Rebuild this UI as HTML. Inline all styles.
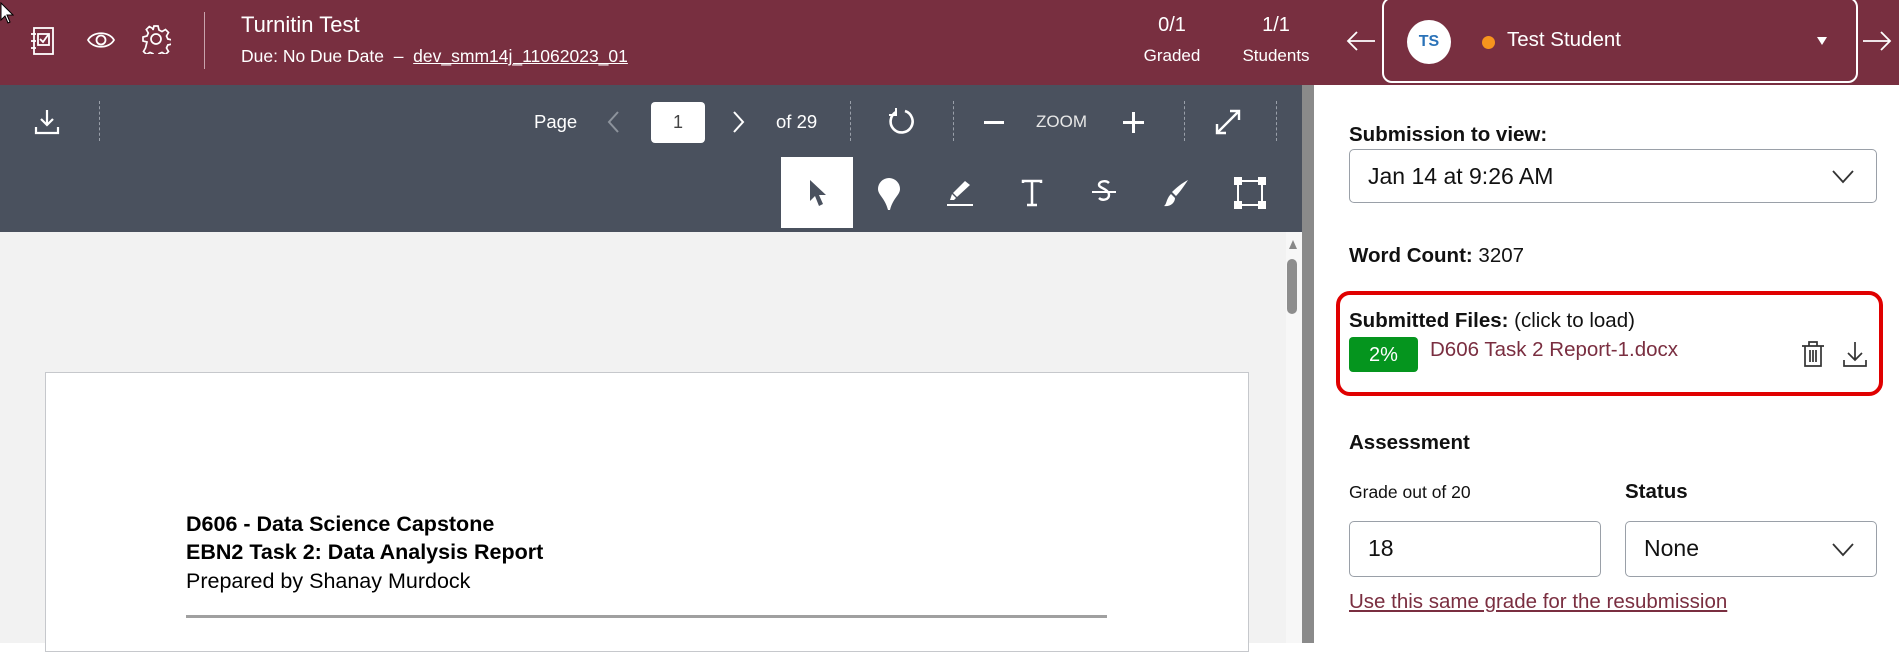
<!DOCTYPE html>
<html><head><meta charset="utf-8"><style>
*{box-sizing:border-box;margin:0;padding:0}
body{width:1899px;height:643px;overflow:hidden;font-family:"Liberation Sans",Arial,sans-serif;background:#fff;position:relative}
.a{position:absolute}
.hdr{left:0;top:0;width:1899px;height:85px;background:#782f40;color:#fff}
.tb{left:0;top:85px;width:1302px;height:147px;background:#4a515e;color:#fff}
.doc{left:0;top:232px;width:1302px;height:411px;background:#f2f2f2}
.sep{left:1302px;top:85px;width:12px;height:558px;background:#8a8a8a}
.dash{border-left:1px dashed #9aa0aa;width:0}
svg{position:absolute}
.lbl{font-weight:bold;font-size:20.5px;color:#111}
.box{border:1px solid #9aa0a8;border-radius:5px;background:#fff}
</style></head><body>
<div class="a hdr">
 <svg style="left:0;top:2px" width="14" height="22" viewBox="0 0 14 22"><path d="M1 1 L1 18 L5 14 L8 21 L10 20 L7 13 L13 13 Z" fill="#fff" stroke="#000" stroke-width="1"/></svg>
 <svg style="left:30px;top:26px" width="26" height="30" viewBox="0 0 26 30" fill="none" stroke="#fff" stroke-width="1.8"><rect x="4" y="2" width="19" height="26"/><path d="M1 8h5M1 15h5M1 22h5"/><rect x="8" y="8" width="11" height="11"/><path d="M10 13l3 3 5-7"/></svg>
 <svg style="left:86px;top:28px" width="30" height="24" viewBox="0 0 30 24" fill="none" stroke="#fff" stroke-width="1.8"><path d="M2 12C7 3 23 3 28 12C23 21 7 21 2 12Z"/><circle cx="15" cy="12" r="4.5"/></svg>
 <svg style="left:141px;top:24px" width="30" height="30" viewBox="0 0 30 30" fill="none" stroke="#fff" stroke-width="1.7"><path d="M13 2h4l1 4 3 1.5 3.5-2 3 3-2 3.5 1.3 3 4 1v4l-4 1-1.3 3 2 3.5-3 3-3.5-2-3 1.3-1 4h-4l-1-4-3-1.3-3.5 2-3-3 2-3.5L6 18l-4-1v-4l4-1 1.3-3-2-3.5 3-3 3.5 2L12 6z"/><circle cx="15" cy="15" r="5"/></svg>
 <div class="a" style="left:204px;top:12px;width:1px;height:57px;background:#c9a3ad"></div>
 <div class="a" style="left:241px;top:12px;font-size:22px">Turnitin Test</div>
 <div class="a" style="left:241px;top:46px;font-size:17.5px">Due: No Due Date &nbsp;–&nbsp; <span style="text-decoration:underline">dev_smm14j_11062023_01</span></div>
 <div class="a" style="left:1142px;top:14px;width:60px;text-align:center;font-size:20px">0/1</div>
 <div class="a" style="left:1142px;top:46px;width:60px;text-align:center;font-size:17px">Graded</div>
 <div class="a" style="left:1236px;top:14px;width:80px;text-align:center;font-size:20px">1/1</div>
 <div class="a" style="left:1236px;top:46px;width:80px;text-align:center;font-size:17px">Students</div>
 <svg style="left:1346px;top:30px" width="30" height="22" viewBox="0 0 30 22" fill="none" stroke="#fff" stroke-width="1.8"><path d="M29 11H2M11 2L2 11l9 9"/></svg>
 <div class="a" style="left:1382px;top:-3px;width:476px;height:86px;border:2px solid #fff;border-radius:10px"></div>
 <div class="a" style="left:1407px;top:20px;width:44px;height:44px;border-radius:50%;background:#fff;color:#2a72b8;font-weight:bold;font-size:16px;text-align:center;line-height:44px">TS</div>
 <div class="a" style="left:1482px;top:36px;width:13px;height:13px;border-radius:50%;background:#f7941d"></div>
 <div class="a" style="left:1507px;top:28px;font-size:20.5px">Test Student</div>
 <div class="a" style="left:1817px;top:37px;width:0;height:0;border-left:5px solid transparent;border-right:5px solid transparent;border-top:8px solid #fff"></div>
 <svg style="left:1862px;top:30px" width="30" height="22" viewBox="0 0 30 22" fill="none" stroke="#fff" stroke-width="1.8"><path d="M1 11h27M19 2l9 9-9 9"/></svg>
</div>
<div class="a tb">
 <svg style="left:34px;top:23px" width="26" height="28" viewBox="0 0 26 28" fill="none" stroke="#fff" stroke-width="2.2"><path d="M13 2v15M7 11l6 6 6-6M2 19v6h22v-6"/></svg>
 <div class="a dash" style="left:99px;top:16px;height:40px"></div>
 <div class="a" style="left:534px;top:26px;font-size:18.5px">Page</div>
 <svg style="left:606px;top:25px" width="14" height="24" viewBox="0 0 14 24" fill="none" stroke="#8d939c" stroke-width="2"><path d="M12 2L3 12l9 10"/></svg>
 <div class="a" style="left:651px;top:17px;width:54px;height:41px;background:#fff;border-radius:4px;color:#444;font-size:18px;text-align:center;line-height:41px">1</div>
 <svg style="left:732px;top:25px" width="14" height="24" viewBox="0 0 14 24" fill="none" stroke="#fff" stroke-width="2"><path d="M2 2l9 10-9 10"/></svg>
 <div class="a" style="left:776px;top:26px;font-size:18.5px">of 29</div>
 <div class="a dash" style="left:850px;top:16px;height:40px"></div>
 <svg style="left:886px;top:22px" width="30" height="30" viewBox="0 0 30 30" fill="none" stroke="#fff" stroke-width="2.6"><path d="M10 5A11 11 0 1 0 19 4"/><path d="M10 1v7H3" stroke-width="2"/></svg>
 <div class="a dash" style="left:953px;top:16px;height:40px"></div>
 <div class="a" style="left:984px;top:36px;width:20px;height:3px;background:#fff"></div>
 <div class="a" style="left:1036px;top:27px;font-size:17px;color:#e8e8e8">ZOOM</div>
 <div class="a" style="left:1123px;top:36px;width:21px;height:3px;background:#fff"></div>
 <div class="a" style="left:1132px;top:27px;width:3px;height:21px;background:#fff"></div>
 <div class="a dash" style="left:1184px;top:16px;height:40px"></div>
 <svg style="left:1213px;top:22px" width="30" height="30" viewBox="0 0 30 30" fill="none" stroke="#fff" stroke-width="2.4"><path d="M4 26L26 4M17 4h9v9M4 17v9h9"/></svg>
 <div class="a dash" style="left:1276px;top:16px;height:40px"></div>
 <div class="a" style="left:781px;top:72px;width:72px;height:71px;background:#fff"></div>
 <svg style="left:808px;top:94px" width="20" height="28" viewBox="0 0 20 28"><path d="M2 1v21l5-5 4 10 4-2-4-9h7z" fill="#4a515e"/></svg>
 <svg style="left:877px;top:92px" width="24" height="34" viewBox="0 0 24 34"><path d="M12 1a11 11 0 0 1 11 11c0 6-7 9-10 21h-2C8 21 1 18 1 12A11 11 0 0 1 12 1z" fill="#fff"/></svg>
 <svg style="left:946px;top:93px" width="30" height="30" viewBox="0 0 30 30" fill="#fff"><path d="M11 19l-4-4L19 3l5 4z"/><path d="M6 16l4 4-2 2H4z"/><rect x="1" y="26" width="26" height="2"/></svg>
 <svg style="left:1021px;top:94px" width="22" height="28" viewBox="0 0 22 28" fill="none" stroke="#fff" stroke-width="2.5"><path d="M2 4V2h18v2M11 2v24M6 26h10"/></svg>
 <svg style="left:1091px;top:93px" width="26" height="30" viewBox="0 0 26 30" fill="none" stroke="#fff" stroke-width="2.4"><path d="M18 5c-3-3-10-2-10 2 0 3 10 4 10 10 0 5-7 6-10 3"/><path d="M1 14h24" stroke-width="2"/></svg>
 <svg style="left:1162px;top:93px" width="28" height="30" viewBox="0 0 28 30" fill="#fff"><path d="M26 2c-4 6-8 12-12 16l-4-4C14 10 20 5 26 2z"/><path d="M9 16l4 4c0 5-5 9-11 8 3-2 2-7 7-12z"/></svg>
 <svg style="left:1234px;top:92px" width="32" height="32" viewBox="0 0 32 32" fill="#fff"><rect x="4" y="4" width="24" height="24" fill="none" stroke="#fff" stroke-width="2"/><rect x="0" y="0" width="8" height="8"/><rect x="24" y="0" width="8" height="8"/><rect x="0" y="24" width="8" height="8"/><rect x="24" y="24" width="8" height="8"/></svg>
</div>
<div class="a doc">
 <div class="a" style="left:1286px;top:0;width:16px;height:411px;background:#f7f7f7"></div>
 <div class="a" style="left:1289px;top:8px;width:0;height:0;border-left:4px solid transparent;border-right:4px solid transparent;border-bottom:9px solid #888"></div>
 <div class="a" style="left:1287px;top:27px;width:10px;height:55px;border-radius:5px;background:#8d8d8d"></div>
 <div class="a" style="left:45px;top:140px;width:1204px;height:280px;background:#fff;border:1px solid #c6c8cc"></div>
 <div class="a" style="left:186px;top:280px;font-size:21.5px;font-weight:bold;color:#000">D606 - Data Science Capstone</div>
 <div class="a" style="left:186px;top:308px;font-size:21.5px;font-weight:bold;color:#000">EBN2 Task 2: Data Analysis Report</div>
 <div class="a" style="left:186px;top:337px;font-size:21.5px;color:#000">Prepared by Shanay Murdock</div>
 <div class="a" style="left:186px;top:383px;width:921px;height:3px;background:#a0a0a0"></div>
</div>
<div class="a sep"></div>
<div class="a lbl" style="left:1349px;top:123px">Submission to view:</div>
<div class="a box" style="left:1349px;top:149px;width:528px;height:54px"></div>
<div class="a" style="left:1368px;top:163px;font-size:23px;color:#111">Jan 14 at 9:26 AM</div>
<svg style="left:1832px;top:170px" width="22" height="14" viewBox="0 0 22 14" fill="none" stroke="#333" stroke-width="1.8"><path d="M1 1l10 11L21 1"/></svg>
<div class="a" style="left:1349px;top:244px;font-size:20.5px;color:#111"><b>Word Count:</b> 3207</div>
<div class="a" style="left:1336px;top:291px;width:547px;height:105px;border:4px solid #e00000;border-radius:14px"></div>
<div class="a" style="left:1349px;top:309px;font-size:20.5px;color:#111"><b>Submitted Files:</b> (click to load)</div>
<div class="a" style="left:1349px;top:337px;width:69px;height:35px;background:#05951e;border-radius:4px;color:#fff;font-size:20px;text-align:center;line-height:36px">2%</div>
<div class="a" style="left:1430px;top:338px;font-size:20.5px;color:#7a2e40">D606 Task 2 Report-1.docx</div>
<svg style="left:1801px;top:340px" width="24" height="28" viewBox="0 0 24 28" fill="none" stroke="#333" stroke-width="1.7"><path d="M1 6h22M8 6V2h8v4M4 6v20h16V6M9 10v12M12 10v12M15 10v12"/></svg>
<svg style="left:1843px;top:340px" width="24" height="28" viewBox="0 0 24 28" fill="none" stroke="#333" stroke-width="1.7"><path d="M12 2v18M5 13l7 7 7-7M1 20v6h22v-6"/></svg>
<div class="a lbl" style="left:1349px;top:431px">Assessment</div>
<div class="a" style="left:1349px;top:482px;font-size:17.5px;color:#111">Grade out of 20</div>
<div class="a lbl" style="left:1625px;top:480px">Status</div>
<div class="a box" style="left:1349px;top:521px;width:252px;height:56px"></div>
<div class="a" style="left:1368px;top:535px;font-size:23px;color:#111">18</div>
<div class="a box" style="left:1625px;top:521px;width:252px;height:56px"></div>
<div class="a" style="left:1644px;top:535px;font-size:23px;color:#111">None</div>
<svg style="left:1832px;top:543px" width="22" height="14" viewBox="0 0 22 14" fill="none" stroke="#333" stroke-width="1.8"><path d="M1 1l10 11L21 1"/></svg>
<div class="a" style="left:1349px;top:590px;font-size:20.5px;color:#7a2e40;text-decoration:underline">Use this same grade for the resubmission</div>
</body></html>
